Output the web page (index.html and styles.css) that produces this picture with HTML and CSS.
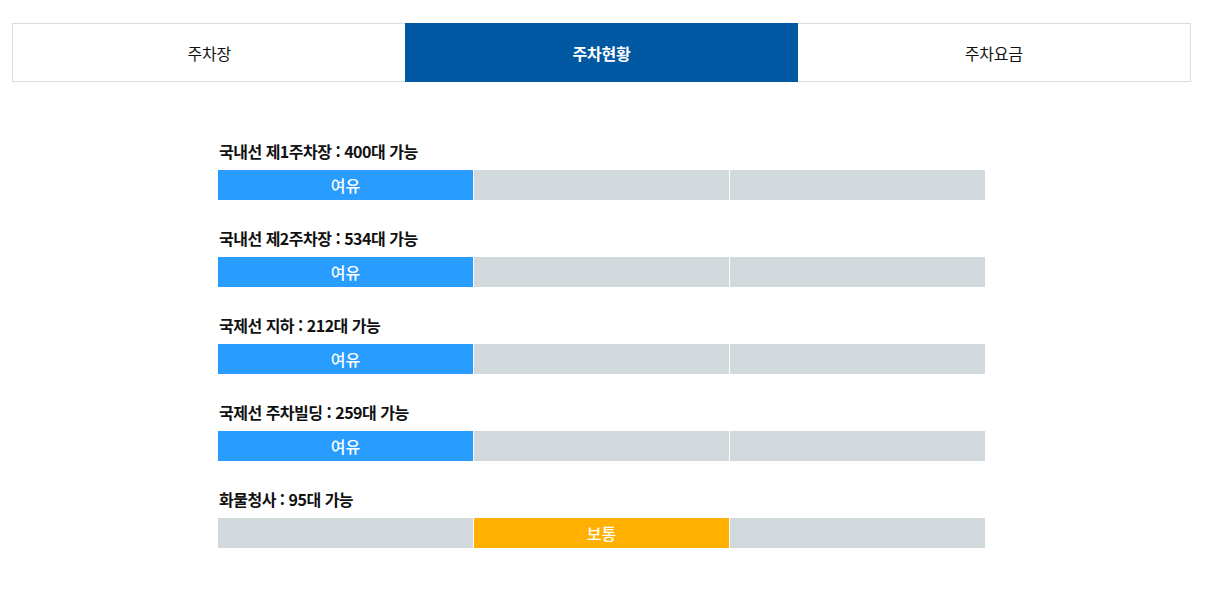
FILE: index.html
```html
<!DOCTYPE html>
<html lang="ko">
<head>
<meta charset="utf-8">
<title>주차현황</title>
<link rel="stylesheet" href="styles.css">
</head>
<body>
<div class="page">
  <ul class="tabs">
    <li class="tab">주차장</li>
    <li class="tab active">주차현황</li>
    <li class="tab">주차요금</li>
  </ul>
  <div class="status">
    <div class="row">
      <p class="label">국내선 제1주차장 : 400대 가능</p>
      <div class="bar">
        <span class="seg blue">여유</span>
        <span class="seg"></span>
        <span class="seg"></span>
      </div>
    </div>
    <div class="row">
      <p class="label">국내선 제2주차장 : 534대 가능</p>
      <div class="bar">
        <span class="seg blue">여유</span>
        <span class="seg"></span>
        <span class="seg"></span>
      </div>
    </div>
    <div class="row">
      <p class="label">국제선 지하 : 212대 가능</p>
      <div class="bar">
        <span class="seg blue">여유</span>
        <span class="seg"></span>
        <span class="seg"></span>
      </div>
    </div>
    <div class="row">
      <p class="label">국제선 주차빌딩 : 259대 가능</p>
      <div class="bar">
        <span class="seg blue">여유</span>
        <span class="seg"></span>
        <span class="seg"></span>
      </div>
    </div>
    <div class="row">
      <p class="label">화물청사 : 95대 가능</p>
      <div class="bar">
        <span class="seg"></span>
        <span class="seg orange">보통</span>
        <span class="seg"></span>
      </div>
    </div>
  </div>
</div>
</body>
</html>
```

FILE: styles.css
```css
* { box-sizing: border-box; }
body {
  margin: 0;
  background: #fff;
  font-family: "Noto Sans CJK KR", "Noto Sans", sans-serif;
  color: #111;
}
.page {
  width: 1179px;
  margin: 23px 0 0 12px;
}
.tabs {
  list-style: none;
  margin: 0;
  padding: 0;
  display: flex;
  border: 1px solid #dcdcdc;
  height: 59px;
}
.tab {
  flex: 1;
  display: flex;
  align-items: center;
  justify-content: center;
  font-size: 16px;
  letter-spacing: -0.2px;
  color: #111;
}
.tab.active {
  background: #0059a2;
  color: #fff;
  font-weight: 700;
  margin: -1px 0;
}
.status {
  width: 767px;
  margin: 59px auto 0;
}
.row { margin-bottom: 28px; }
.label {
  margin: 0 0 9px 1px;
  font-size: 16px;
  line-height: 20px;
  font-weight: 700;
  letter-spacing: -0.5px;
  color: #111;
}
.bar {
  display: flex;
  gap: 1px;
  height: 30px;
}
.seg {
  flex: 1;
  background: #d2d9dd;
  color: #fff;
  font-size: 16px;
  font-weight: 500;
  display: flex;
  align-items: center;
  justify-content: center;
}
.seg.blue { background: #289cff; }
.seg.orange { background: #ffb000; }
```
